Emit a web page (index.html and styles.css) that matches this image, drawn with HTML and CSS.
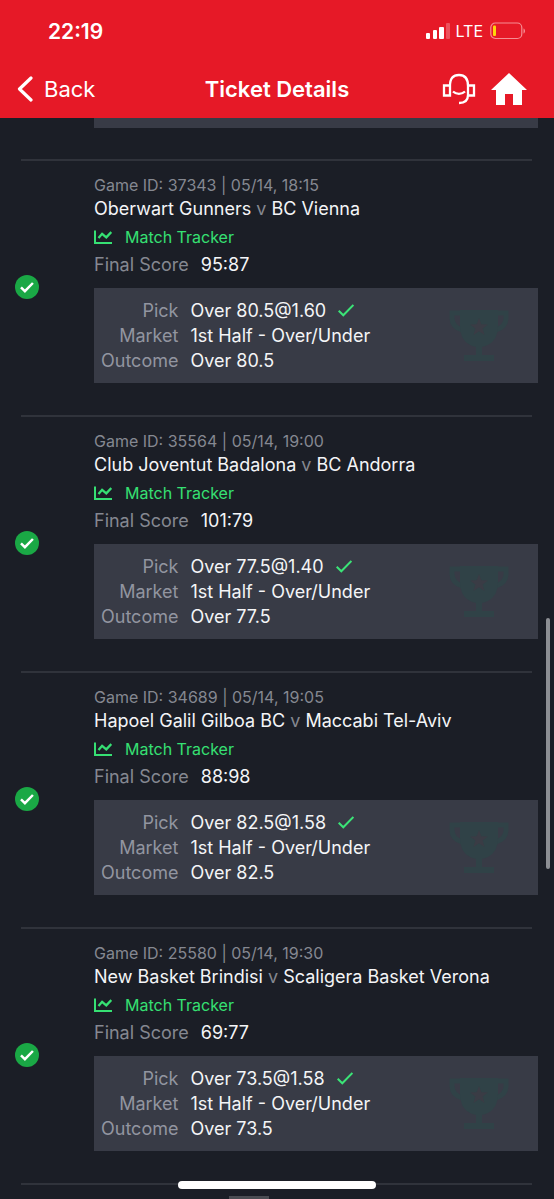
FILE: index.html
```html
<!DOCTYPE html>
<html lang="en">
<head>
<meta charset="utf-8">
<meta name="viewport" content="width=device-width, initial-scale=1">
<title>Ticket Details</title>
<link rel="stylesheet" href="styles.css">
</head>
<body>
<svg class="sprite" aria-hidden="true">
  <symbol id="won" viewBox="0 0 24 24"><circle cx="12" cy="12" r="12" fill="#1aa845"/><path d="M6 12.4l3.9 3.8 8-8.2" fill="none" stroke="#fff" stroke-width="2.5"/></symbol>
  <symbol id="chart" viewBox="0 0 18 14"><path d="M1 .5v12.500h17" fill="none" stroke="#36e073" stroke-width="2"/><path d="M4.500 8l3.600-4.200 4.200 3.600L17.300 2" fill="none" stroke="#36e073" stroke-width="2.300"/></symbol>
  <symbol id="tick" viewBox="0 0 16 13"><path d="M.7 6.700l4.600 4.600L15.400 1" fill="none" stroke="#3be477" stroke-width="2"/></symbol>
  <symbol id="cup" viewBox="0 0 60 54"><path d="M12 4H3v5c0 6 4 10 10 12M48 4h9v5c0 6-4 10-10 12" fill="none" stroke="#304247" stroke-width="5"/><path fill="#304247" d="M11 1h38v16c0 12-6 19-16 21v8h12v6H15v-6h12v-8C17 36 11 29 11 17z"/><path fill="#3a3c45" d="M30 9l2.300 6.200 6.600.300-5.200 4.100 1.800 6.400L30 22.300l-5.500 3.700 1.800-6.400-5.200-4.100 6.600-.300z"/></symbol>
</svg>
<div class="app">
  <header class="header">
    <div class="status">
      <span class="clock">22:19</span>
      <svg class="signal" viewBox="0 0 26 16" aria-hidden="true"><g fill="#fff"><rect x="1" y="10" width="4" height="6" rx="1"/><rect x="8" y="7" width="4" height="9" rx="1"/><rect x="14" y="4" width="5" height="12" rx="1"/><rect x="21" y="0" width="4" height="16" rx="1" opacity=".25"/></g></svg>
      <span class="carrier">LTE</span>
      <svg class="battery" viewBox="0 0 36 18" aria-hidden="true"><rect x=".8" y="1" width="31" height="15.500" rx="4.500" fill="none" stroke="#f58d93" stroke-width="1.200"/><path d="M33.500 6.500c2 .6 2 4.400 0 5z" fill="#f58d93"/><rect x="3" y="3.500" width="3" height="10.500" rx="1" fill="#ffd60a"/></svg>
    </div>
    <nav class="nav">
      <button class="back" type="button"><svg class="chevron" viewBox="0 0 16 26" aria-hidden="true"><path d="M14 2L2.500 13 14 24" fill="none" stroke="#fff" stroke-width="3.200" stroke-linecap="round" stroke-linejoin="round"/></svg>Back</button>
      <h1 class="title">Ticket Details</h1>
      <div class="actions">
        <button class="icon-button" type="button" aria-label="Support"><svg class="headset" viewBox="0 0 34 32" aria-hidden="true"><g fill="none" stroke="#fff" stroke-width="2.300"><path d="M2 12.500h6v10H2zM26 12.500h6v10h-6zM8 13C8 5.500 11 2 17 2s9 3.500 9 11M26 22c0 5-3 8-9 8"/><path d="M11 18.500c3.500 3.200 8.500 3.200 12 0"/></g></svg></button>
        <button class="icon-button" type="button" aria-label="Home"><svg class="home" viewBox="0 0 36 32" aria-hidden="true"><path d="M18 0l18 17h-5v15h-9V21h-8v11H5V17H0z" fill="#fff"/></svg></button>
      </div>
    </nav>
  </header>
  <main class="games">
    <div class="previous"></div>
    <article class="game">
      <svg class="result" aria-label="Won"><use href="#won"/></svg>
      <div class="info">
        <p class="meta">Game ID: 37343 | 05/14, 18:15</p>
        <h2 class="teams">Oberwart Gunners <span class="versus">v</span> BC Vienna</h2>
        <a class="tracker" href="#"><svg class="chart"><use href="#chart"/></svg>Match Tracker</a>
        <p class="score"><span class="label">Final Score</span>95:87</p>
        <div class="bet">
          <dl class="details">
            <dt>Pick</dt><dd>Over 80.5@1.60<svg class="tick"><use href="#tick"/></svg></dd>
            <dt>Market</dt><dd>1st Half - Over/Under</dd>
            <dt>Outcome</dt><dd>Over 80.5</dd>
          </dl>
          <svg class="cup"><use href="#cup"/></svg>
        </div>
      </div>
    </article>
    <article class="game">
      <svg class="result" aria-label="Won"><use href="#won"/></svg>
      <div class="info">
        <p class="meta">Game ID: 35564 | 05/14, 19:00</p>
        <h2 class="teams">Club Joventut Badalona <span class="versus">v</span> BC Andorra</h2>
        <a class="tracker" href="#"><svg class="chart"><use href="#chart"/></svg>Match Tracker</a>
        <p class="score"><span class="label">Final Score</span>101:79</p>
        <div class="bet">
          <dl class="details">
            <dt>Pick</dt><dd>Over 77.5@1.40<svg class="tick"><use href="#tick"/></svg></dd>
            <dt>Market</dt><dd>1st Half - Over/Under</dd>
            <dt>Outcome</dt><dd>Over 77.5</dd>
          </dl>
          <svg class="cup"><use href="#cup"/></svg>
        </div>
      </div>
    </article>
    <article class="game">
      <svg class="result" aria-label="Won"><use href="#won"/></svg>
      <div class="info">
        <p class="meta">Game ID: 34689 | 05/14, 19:05</p>
        <h2 class="teams">Hapoel Galil Gilboa BC <span class="versus">v</span> Maccabi Tel-Aviv</h2>
        <a class="tracker" href="#"><svg class="chart"><use href="#chart"/></svg>Match Tracker</a>
        <p class="score"><span class="label">Final Score</span>88:98</p>
        <div class="bet">
          <dl class="details">
            <dt>Pick</dt><dd>Over 82.5@1.58<svg class="tick"><use href="#tick"/></svg></dd>
            <dt>Market</dt><dd>1st Half - Over/Under</dd>
            <dt>Outcome</dt><dd>Over 82.5</dd>
          </dl>
          <svg class="cup"><use href="#cup"/></svg>
        </div>
      </div>
    </article>
    <article class="game">
      <svg class="result" aria-label="Won"><use href="#won"/></svg>
      <div class="info">
        <p class="meta">Game ID: 25580 | 05/14, 19:30</p>
        <h2 class="teams">New Basket Brindisi <span class="versus">v</span> Scaligera Basket Verona</h2>
        <a class="tracker" href="#"><svg class="chart"><use href="#chart"/></svg>Match Tracker</a>
        <p class="score"><span class="label">Final Score</span>69:77</p>
        <div class="bet">
          <dl class="details">
            <dt>Pick</dt><dd>Over 73.5@1.58<svg class="tick"><use href="#tick"/></svg></dd>
            <dt>Market</dt><dd>1st Half - Over/Under</dd>
            <dt>Outcome</dt><dd>Over 73.5</dd>
          </dl>
          <svg class="cup"><use href="#cup"/></svg>
        </div>
      </div>
    </article>
    <div class="next"></div>
  </main>
  <div class="scroll-thumb"></div>
  <div class="sheet-handle"></div>
  <div class="home-indicator"></div>
</div>
</body>
</html>
```
FILE: styles.css
```css
* { box-sizing: border-box; }
body {
  margin: 0;
  background: #1b1e26;
  color: #f4f5f7;
  font-family: Inter, "Liberation Sans", sans-serif;
  font-size: 18px;
}
h1, h2, p, dl, dd { margin: 0; font-weight: 400; }
svg { flex: none; }
button { padding: 0; border: 0; background: none; color: inherit; font: inherit; }
.sprite { position: absolute; width: 0; height: 0; }
.app { position: relative; height: 100vh; overflow: hidden; }

.header { background: #e61927; color: #fff; }
.status { display: flex; align-items: center; height: 60px; padding: 2px 28px 0 48px; }
.clock { flex: 1; font-size: 21px; font-weight: 600; }
.signal { width: 26px; height: 16px; }
.carrier { margin: 0 7px 0 5px; font-size: 16px; }
.battery { width: 36px; height: 18px; }
.nav {
  display: grid;
  grid-template-columns: 1fr auto 1fr;
  align-items: center;
  height: 58px;
  padding: 0 17px;
}
.back { display: flex; align-items: center; gap: 11px; font-size: 22px; }
.chevron { width: 16px; height: 26px; }
.title { font-size: 22px; font-weight: 600; }
.actions { display: flex; justify-content: flex-end; align-items: center; gap: 15px; padding-right: 10px; }
.icon-button { display: flex; }
.headset { width: 34px; height: 32px; }
.home { width: 36px; height: 32px; }

.previous { height: 10px; margin: 0 16px 31px 94px; background: #383b46; }
.game { position: relative; display: flex; align-items: center; padding: 15px 16px 32px 15px; }
.game::before, .next {
  content: "";
  height: 2px;
  background: #30333b;
}
.game::before { position: absolute; top: 0; left: 21px; right: 22px; }
.next { margin: 0 22px 0 21px; }
.result { width: 24px; height: 24px; margin: 17px 55px 0 0; }
.info { flex: 1; min-width: 0; }
.meta { font-size: 16px; line-height: 22px; color: #858891; }
.teams { font-size: 18px; line-height: 26px; }
.versus { color: #858891; }
.tracker {
  display: flex;
  align-items: center;
  gap: 13px;
  height: 30px;
  font-size: 16px;
  color: #36e073;
  text-decoration: none;
}
.chart { width: 18px; height: 14px; }
.score { line-height: 26px; }
.label { margin-right: 12px; color: #858891; }
.bet {
  display: flex;
  align-items: center;
  justify-content: space-between;
  margin-top: 10px;
  padding: 10px 29px 10px 7px;
  background: #383b46;
}
.details { display: grid; grid-template-columns: auto auto; column-gap: 12px; line-height: 25px; }
.details dt { text-align: right; color: #9295a0; }
.tick { width: 16px; height: 13px; margin-left: 12px; }
.cup { width: 60px; height: 54px; }

.scroll-thumb {
  position: absolute;
  top: 618px;
  right: 4px;
  width: 4px;
  height: 251px;
  border-radius: 2px;
  background: #8d8f94;
}
.home-indicator {
  position: absolute;
  bottom: 10px;
  left: 50%;
  width: 198px;
  height: 8px;
  margin-left: -99px;
  border-radius: 4px;
  background: #fff;
}
.sheet-handle {
  position: absolute;
  bottom: 0;
  left: 229px;
  width: 40px;
  height: 3px;
  background: #4a4c52;
}
```
